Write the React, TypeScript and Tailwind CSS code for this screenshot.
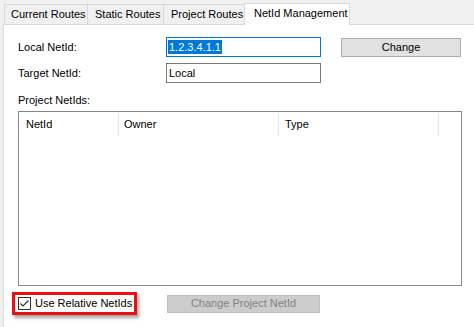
import React from 'react';

const tabs = ['Current Routes', 'Static Routes', 'Project Routes'];

export default function App() {
  return (
    <div className="w-[474px] h-[327px] bg-[#f0f0f0] flex flex-col overflow-hidden whitespace-nowrap text-[11px] text-black font-['Liberation_Sans',Arial,sans-serif]">
      {/* Tab strip */}
      <div className="flex items-end h-[25px] pl-[4px] ml-[3px] border-b border-[#d9d9d9]">
        <div className="flex items-end -ml-[3px]">
          {tabs.map((t, i) => (
            <div
              key={t}
              className={`h-[20px] flex items-center border-t border-l border-[#d9d9d9] bg-[#f0f0f0] ${i === 0 ? 'w-[83px] pl-[6px]' : i === 1 ? 'w-[76px] pl-[7px]' : 'w-[81px] pl-[7px]'}`}
            >
              {t}
            </div>
          ))}
          <div className="relative z-10 h-[22px] -mb-px w-[106px] pl-[9px] pb-[2px] flex items-center bg-white border-t border-l border-r border-[#d9d9d9]">
            NetId Management
          </div>
        </div>
      </div>

      {/* Panel */}
      <div className="flex-1 ml-[3px] bg-white border-l border-[#d9d9d9] pl-[14px] pt-[12px] flex flex-col">
        <div className="flex items-center h-[20px]">
          <div className="w-[148px] pt-[1px]">Local NetId:</div>
          <div className="w-[155px] h-[20px] border border-[#0078d7] flex items-center px-[1px]">
            <span className="bg-[#0078d7] text-white px-[1px] leading-[14px]">1.2.3.4.1.1</span>
          </div>
          <button className="ml-[20px] w-[120px] h-[19px] bg-[#e1e1e1] border border-[#adadad] flex items-center justify-center">
            Change
          </button>
        </div>

        <div className="flex items-center h-[20px] mt-[6px]">
          <div className="w-[148px] pt-[1px]">Target NetId:</div>
          <div className="w-[155px] h-[20px] border border-[#7a7a7a] flex items-center px-[2px]">Local</div>
        </div>

        <div className="mt-[10px] h-[14px] leading-[14px]">Project NetIds:</div>

        <div className="mt-[4px] w-[444px] h-[175px] border border-[#828790] flex flex-col">
          <div className="flex h-[25px] items-stretch">
            <div className="w-[100px] border-r border-[#e5e5e5] my-[1px] pl-[7px] flex items-center">NetId</div>
            <div className="w-[160px] border-r border-[#e5e5e5] my-[1px] pl-[5px] flex items-center">Owner</div>
            <div className="w-[160px] border-r border-[#e5e5e5] my-[1px] pl-[6px] flex items-center">Type</div>
          </div>
        </div>

        <div className="flex items-center mt-[6px]">
          <div className="-ml-[6px] h-[23px] w-[125px] border-[3px] border-[#e81010] shadow-[2px_3px_3px_rgba(0,0,0,0.35)] flex items-center pl-[3px]">
            <div className="w-[13px] h-[13px] border border-[#333333] bg-white flex items-center justify-center">
              <svg width="11" height="11" viewBox="0 0 11 11">
                <path d="M1.5 5.5 L4 8 L9.5 2.5" fill="none" stroke="#333333" strokeWidth="1.2" />
              </svg>
            </div>
            <span className="ml-[4px]">Use Relative NetIds</span>
          </div>
          <button className="ml-[30px] w-[153px] h-[18px] bg-[#cccccc] border border-[#bfbfbf] text-[#838383] flex items-center justify-center">
            Change Project NetId
          </button>
        </div>
      </div>
    </div>
  );
}
